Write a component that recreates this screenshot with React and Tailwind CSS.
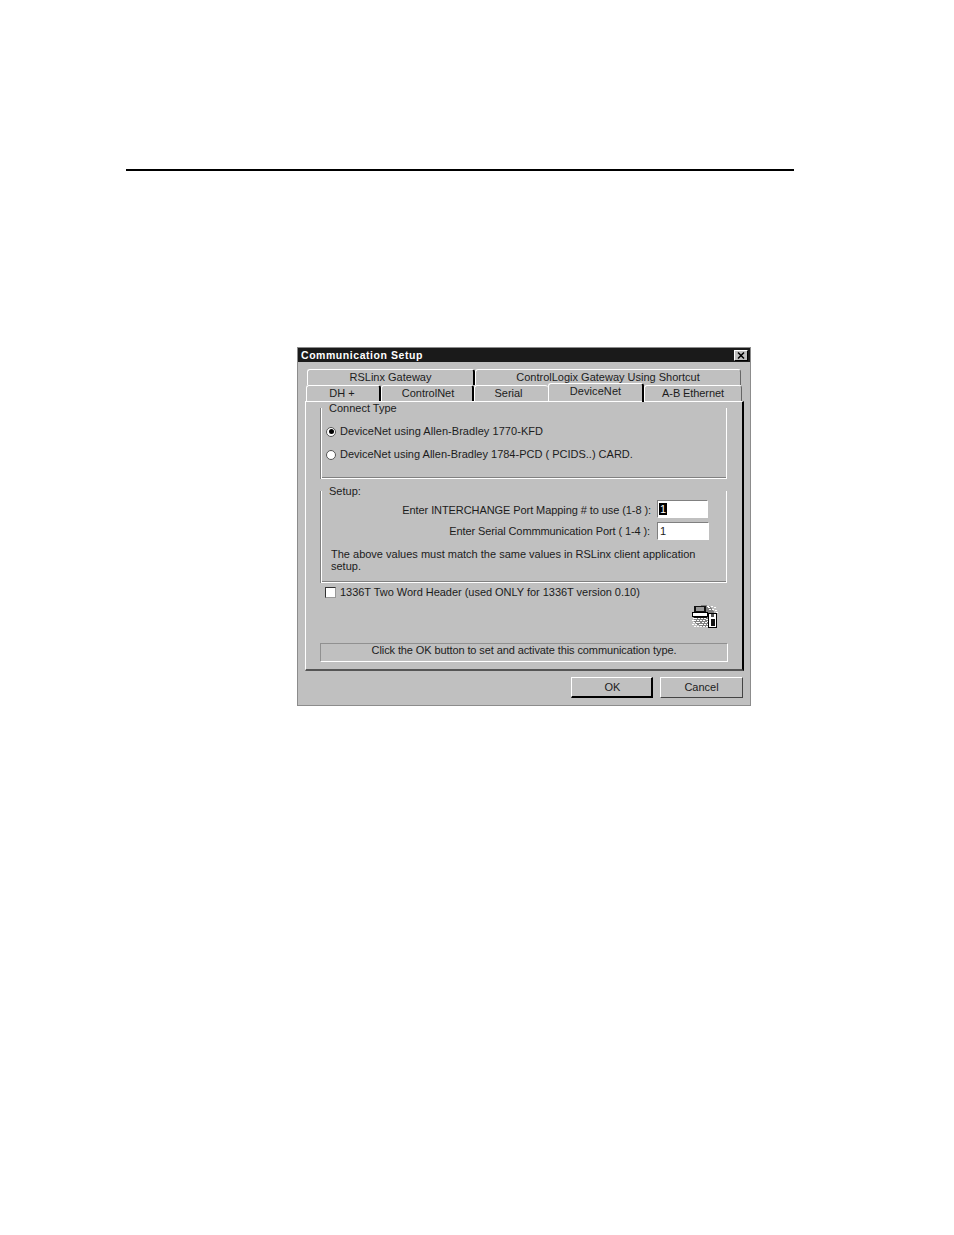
const font = { fontFamily: '"Liberation Sans", Arial, sans-serif' }

function Tab({ label, className }) {
  return (
    <div className={`flex items-center justify-center rounded-t-[3px] border-t border-l border-white border-r-2 border-r-black text-[#1c1c1c] ${className}`}>
      {label}
    </div>
  )
}

function GroupBox({ label, className, children }) {
  return (
    <div className={`mx-[15px] flex flex-col border-l border-r border-b border-white shadow-[inset_0_-1px_0_#808080,-1px_0_0_#808080] ${className}`}>
      <div className="-mt-[6px] pl-[7px] h-[13px] shrink-0">{label}</div>
      {children}
    </div>
  )
}

function Radio({ checked, label, className }) {
  return (
    <div className={`flex items-center ${className}`}>
      <span className="flex items-center justify-center w-[10px] h-[10px] ml-[4px] mr-[4px] rounded-full bg-white border border-[#555]">
        {checked && <span className="w-[5px] h-[5px] rounded-full bg-black" />}
      </span>
      <span>{label}</span>
    </div>
  )
}

// dithered globe speckle, bottom left of the icon and top right corner
const specks = [
  [1, 13], [3, 13], [6, 13], [9, 13], [12, 13], [14, 14], [0, 15], [2, 15], [5, 15], [8, 15], [11, 15],
  [1, 17], [4, 17], [6, 17], [10, 17], [13, 17], [15, 16], [0, 19], [3, 19], [7, 19], [9, 19], [12, 19], [15, 19],
  [2, 21], [5, 21], [8, 21], [11, 21], [14, 21], [16, 2], [19, 1], [22, 2], [17, 4], [20, 4], [23, 5], [15, 1], [24, 7],
]

function PortIcon() {
  return (
    <svg width="27" height="24" viewBox="0 0 27 24" className="block" shapeRendering="crispEdges">
      <circle cx="12" cy="11" r="11" fill="#808080" />
      {specks.map(([x, y]) => (
        <rect key={`${x}-${y}`} x={x} y={y} width="2" height="1" fill="#fff" />
      ))}
      <path d="M2 1h12v7H2z" fill="#111" />
      <path d="M4 2h8v4H4z" fill="#9a9a9a" />
      <path d="M0.5 7.5h15v4h-15z" fill="#fff" stroke="#000" />
      <path d="M2 12h13v1H2z" fill="#111" />
      <path d="M16.5 8.5h8v14h-8z" fill="#fff" stroke="#000" />
      <path d="M19 14h4v7h-4z" fill="#111" />
      <path d="M19 9h3v3h-3z" fill="#555" />
    </svg>
  )
}

export default function App() {
  return (
    <div className="min-h-[1235px] bg-white overflow-hidden" style={font}>
      <div className="ml-[126px] mt-[169px] w-[668px] h-[2px] bg-black" />

      <div className="ml-[297px] mt-[176px] w-[454px] h-[359px] border border-[#8c8c8c] bg-[#c0c0c0] text-[11px] leading-[13px] text-[#1c1c1c]">
        <div className="flex items-center justify-between h-[14px] bg-[#1a1a1a] pl-[3px] pr-[2px]">
          <span className="font-bold text-white tracking-[0.55px] text-[10.5px]">Communication Setup</span>
          <span className="flex items-center justify-center w-[14px] h-[11px] bg-[#c0c0c0] border border-white border-r-black border-b-black text-black">
            <svg width="8" height="7" viewBox="0 0 8 7">
              <path d="M1 0.5l6 6M7 0.5l-6 6" stroke="#000" strokeWidth="1.5" />
            </svg>
          </span>
        </div>

        <div className="pt-[7px] pl-[7px] pr-[7px]">
          <div className="ml-[2px] flex h-[16px]">
            <Tab label="RSLinx Gateway" className="w-[168px]" />
            <Tab label="ControlLogix Gateway Using Shortcut" className="w-[266px] !border-r !border-r-[#666]" />
          </div>
          <div className="relative ml-[1px] flex h-[16px]">
            <Tab label="DH +" className="w-[75px] pr-[2px]" />
            <Tab label="ControlNet" className="w-[93px] pl-[2px]" />
            <Tab label="Serial" className="w-[74px] pr-[6px] !border-r-0" />
            <Tab label="DeviceNet" className="relative z-10 -mt-[2px] h-[19px] w-[96px] !items-start pt-[1px] tracking-[0.08px]" />
            <Tab label="A-B Ethernet" className="w-[98px] !border-r !border-r-[#666] tracking-[-0.1px]" />
          </div>

          <div className="h-[270px] w-[439px] border-t border-l border-white border-r-2 border-r-black border-b-2 border-b-[#555]">
            <GroupBox label="Connect Type" className="mt-[6px] h-[71px]">
              <Radio checked label="DeviceNet using Allen-Bradley 1770-KFD" className="mt-[10px] h-[13px] tracking-[0.05px]" />
              <Radio label="DeviceNet using Allen-Bradley 1784-PCD ( PCIDS..) CARD." className="mt-[10px] h-[13px]" />
            </GroupBox>

            <GroupBox label="Setup:" className="mt-[12px] h-[92px]">
              <div className="mt-[2px] flex items-center justify-end pr-[18px] h-[18px]">
                <span className="mr-[6px] pt-[2px] tracking-[-0.08px]">Enter INTERCHANGE Port Mapping # to use (1-8 ):</span>
                <span className="flex items-center w-[51px] h-[18px] bg-white border border-[#808080] border-r-white border-b-white pl-[1px]">
                  <span className="bg-black text-white px-[1px] leading-[12px]">1</span>
                </span>
              </div>
              <div className="mt-[4px] flex items-center justify-end pr-[17px] h-[18px]">
                <span className="mr-[7px] tracking-[-0.1px]">Enter Serial Commmunication Port ( 1-4 ):</span>
                <span className="flex items-center w-[52px] h-[18px] bg-white border border-[#808080] border-r-white border-b-white pl-[2px]">
                  1
                </span>
              </div>
              <p className="mt-[8px] pl-[9px] pr-[10px] leading-[12px]">
                The above values must match the same values in RSLinx client application setup.
              </p>
            </GroupBox>

            <div className="mt-[3px] flex items-center h-[13px] pl-[19px]">
              <span className="w-[11px] h-[11px] mr-[4px] bg-white border border-[#333] border-r-[#999] border-b-[#999]" />
              <span className="tracking-[-0.03px]">1336T Two Word Header (used ONLY for 1336T version 0.10)</span>
            </div>

            <div className="flex justify-end h-[26px] mt-[5px] pr-[23px] pt-[1px]">
              <PortIcon />
            </div>

            <div className="mx-[14px] mt-[13px] flex h-[19px] items-center justify-center border border-[#909090] border-r-white border-b-white pb-[5px] tracking-[-0.1px]">
              Click the OK button to set and activate this communication type.
            </div>
          </div>

          <div className="mt-[6px] flex justify-end gap-[7px]">
            <button className="h-[21px] w-[82px] pl-[2px] bg-[#c0c0c0] border border-white border-r-2 border-r-black border-b-2 border-b-black">OK</button>
            <button className="h-[21px] w-[83px] bg-[#c0c0c0] border border-white border-r-[#444] border-b-[#444]">Cancel</button>
          </div>
        </div>
      </div>
    </div>
  )
}
